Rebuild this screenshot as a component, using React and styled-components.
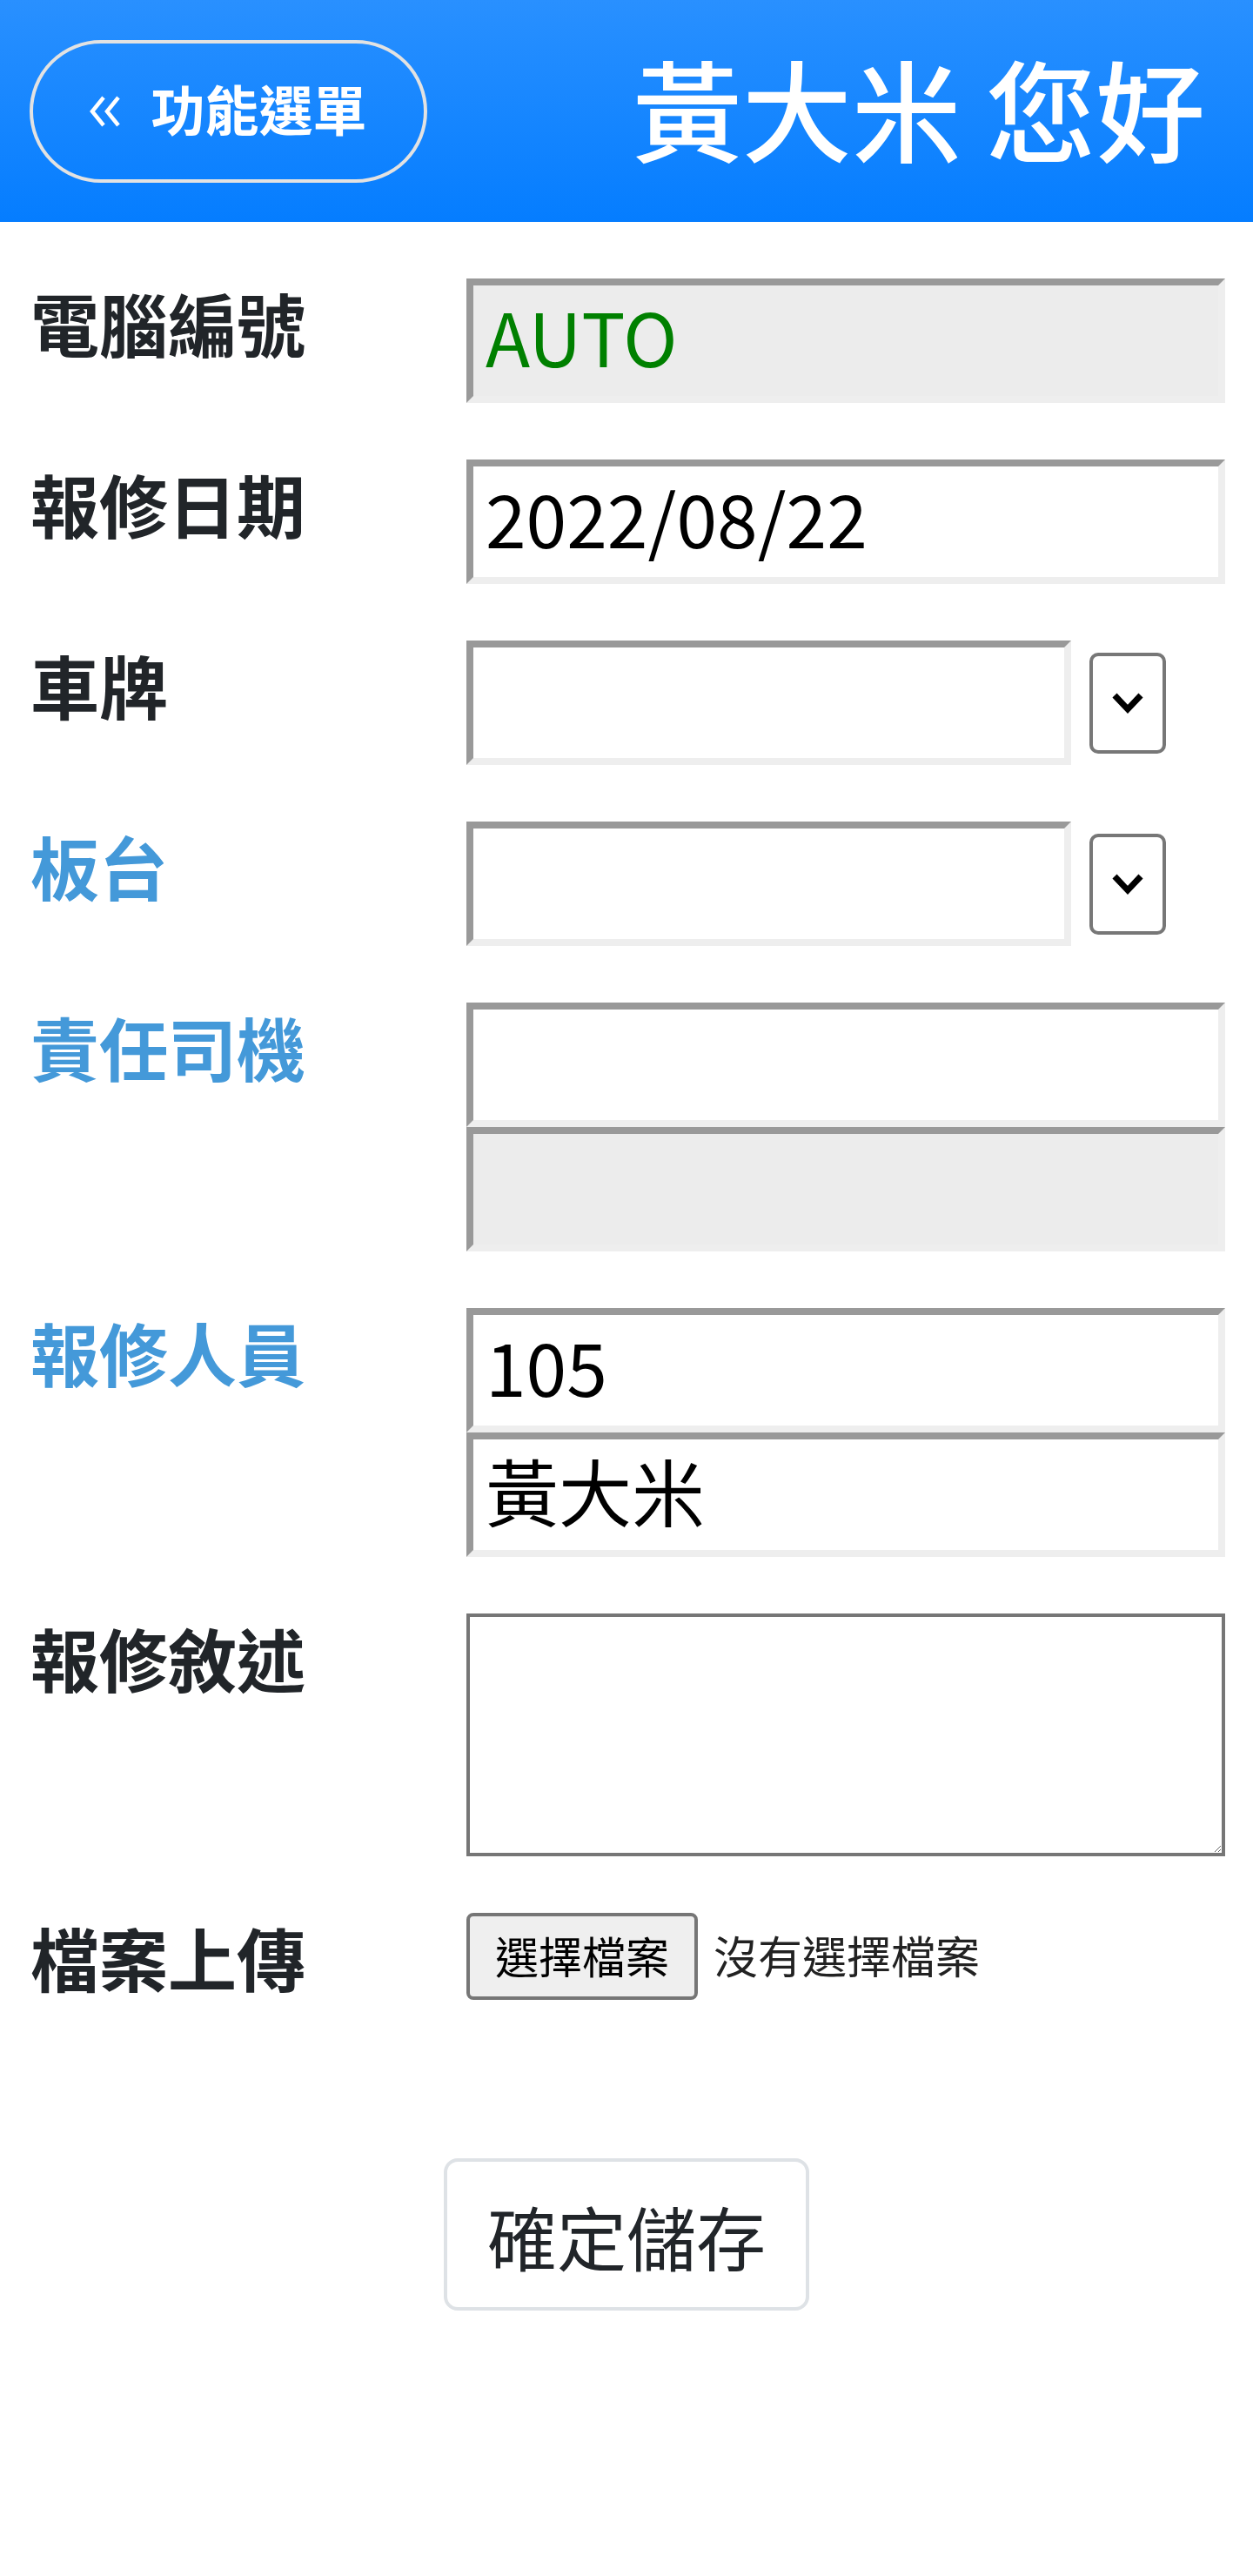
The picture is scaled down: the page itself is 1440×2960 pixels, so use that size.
import React from "react";
import styled, { createGlobalStyle } from "styled-components";

const GlobalStyle = createGlobalStyle`
  body {
    margin: 0;
    background: #fff;
    font-family: "Noto Sans CJK TC", "Noto Sans", sans-serif;
    color: #212529;
  }
`;

const Header = styled.header`
  height: 255px;
  display: flex;
  align-items: center;
  justify-content: space-between;
  padding: 0 55px 0 34px;
  background: linear-gradient(180deg, #2990ff 0%, #057dff 100%);
  box-sizing: border-box;
`;

const MenuButton = styled.button`
  width: 457px;
  height: 164px;
  display: flex;
  align-items: center;
  justify-content: center;
  gap: 34px;
  border: 4px solid #e2e2e2;
  border-radius: 82px;
  background: transparent;
  color: #fff;
  font-family: inherit;
  font-size: 62px;
  font-weight: 700;
  line-height: 1;
  box-sizing: border-box;
  padding: 0 0 8px;
`;

const Arrows = styled.svg`
  width: 36px;
  height: 36px;
  margin-top: 8px;
  flex-shrink: 0;
`;

const Title = styled.h1`
  margin: -12px 0 0;
  color: #fff;
  font-size: 126px;
  font-weight: 500;
  line-height: 1;
`;

const Form = styled.form`
  display: flex;
  flex-direction: column;
  gap: 65px;
  padding: 65px 32px 0 38px;
`;

const Row = styled.div`
  display: grid;
  grid-template-columns: 498px 1fr;
  align-items: start;
`;

const Label = styled.label`
  font-size: 79px;
  font-weight: 700;
  line-height: 1.2;
  padding-top: 4px;
  margin-left: -3px;
  color: ${(p) => (p.$blue ? "#4499d9" : "#212529")};
`;

const Field = styled.div`
  display: flex;
  flex-direction: column;
`;

const InputLine = styled.div`
  display: flex;
  align-items: center;
  gap: 21px;
`;

const Input = styled.input`
  box-sizing: border-box;
  width: ${(p) => (p.$short ? "695px" : "100%")};
  height: 143px;
  border-style: solid;
  border-width: 8px;
  border-color: #999 #eee #eee #999;
  background: ${(p) => (p.readOnly ? "#ececec" : "#fff")};
  color: ${(p) => p.$color || "#000"};
  font-family: "Noto Sans CJK TC", sans-serif;
  font-size: 84px;
  padding: 0 14px 12px;
  outline: none;
`;

const PickButton = styled.button`
  box-sizing: border-box;
  width: 88px;
  height: 116px;
  border: 4px solid #777;
  border-radius: 10px;
  background: #fff;
  display: flex;
  align-items: center;
  justify-content: center;
  padding: 0;
`;

const TextArea = styled.textarea`
  box-sizing: border-box;
  width: 100%;
  height: 279px;
  border: 4px solid #767676;
  font-family: "Noto Sans CJK TC", sans-serif;
  font-size: 60px;
  display: block;
  margin: 0;
`;

const FileLine = styled.div`
  display: flex;
  align-items: center;
  gap: 18px;
`;

const FileButton = styled.button`
  box-sizing: border-box;
  width: 266px;
  height: 100px;
  border: 4px solid #767676;
  border-radius: 8px;
  background: #efefef;
  color: #000;
  font-family: "Noto Sans CJK TC", sans-serif;
  font-size: 50px;
  padding: 0 0 4px;
`;

const FileNote = styled.span`
  font-size: 51px;
  color: #222;
  margin-top: -4px;
`;

const Actions = styled.div`
  display: flex;
  justify-content: center;
  padding: 182px 0 200px;
`;

const SaveButton = styled.button`
  box-sizing: border-box;
  width: 420px;
  height: 175px;
  border: 4px solid #dee2e6;
  border-radius: 16px;
  background: #fff;
  color: #212529;
  font-family: "Noto Sans CJK TC", sans-serif;
  font-size: 80px;
  font-weight: 400;
  padding: 0;
`;

const Chevron = () => (
  <svg width="38" height="26" viewBox="0 0 38 26">
    <polyline
      points="4,4 19,20 34,4"
      fill="none"
      stroke="#000"
      strokeWidth="7"
    />
  </svg>
);

const App = () => {
  return (
    <>
      <GlobalStyle />
      <Header>
        <MenuButton type="button">
          <Arrows viewBox="0 0 36 36">
            <polyline points="16,2 3,18 16,34" fill="none" stroke="#fff" strokeWidth="4.5" />
            <polyline points="33,2 20,18 33,34" fill="none" stroke="#fff" strokeWidth="4.5" />
          </Arrows>
          <span>功能選單</span>
        </MenuButton>
        <Title>黃大米 您好</Title>
      </Header>

      <Form onSubmit={(e) => e.preventDefault()}>
        <Row>
          <Label>電腦編號</Label>
          <Field>
            <Input readOnly value="AUTO" $color="#008000" />
          </Field>
        </Row>
        <Row>
          <Label>報修日期</Label>
          <Field>
            <Input defaultValue="2022/08/22" />
          </Field>
        </Row>
        <Row>
          <Label>車牌</Label>
          <InputLine>
            <Input $short defaultValue="" />
            <PickButton type="button">
              <Chevron />
            </PickButton>
          </InputLine>
        </Row>
        <Row>
          <Label $blue>板台</Label>
          <InputLine>
            <Input $short defaultValue="" />
            <PickButton type="button">
              <Chevron />
            </PickButton>
          </InputLine>
        </Row>
        <Row>
          <Label $blue>責任司機</Label>
          <Field>
            <Input defaultValue="" />
            <Input readOnly value="" />
          </Field>
        </Row>
        <Row>
          <Label $blue>報修人員</Label>
          <Field>
            <Input defaultValue="105" />
            <Input defaultValue="黃大米" />
          </Field>
        </Row>
        <Row>
          <Label>報修敘述</Label>
          <Field>
            <TextArea />
          </Field>
        </Row>
        <Row>
          <Label>檔案上傳</Label>
          <FileLine>
            <FileButton type="button">選擇檔案</FileButton>
            <FileNote>沒有選擇檔案</FileNote>
          </FileLine>
        </Row>
      </Form>

      <Actions>
        <SaveButton type="button">確定儲存</SaveButton>
      </Actions>
    </>
  );
};

export default App;
